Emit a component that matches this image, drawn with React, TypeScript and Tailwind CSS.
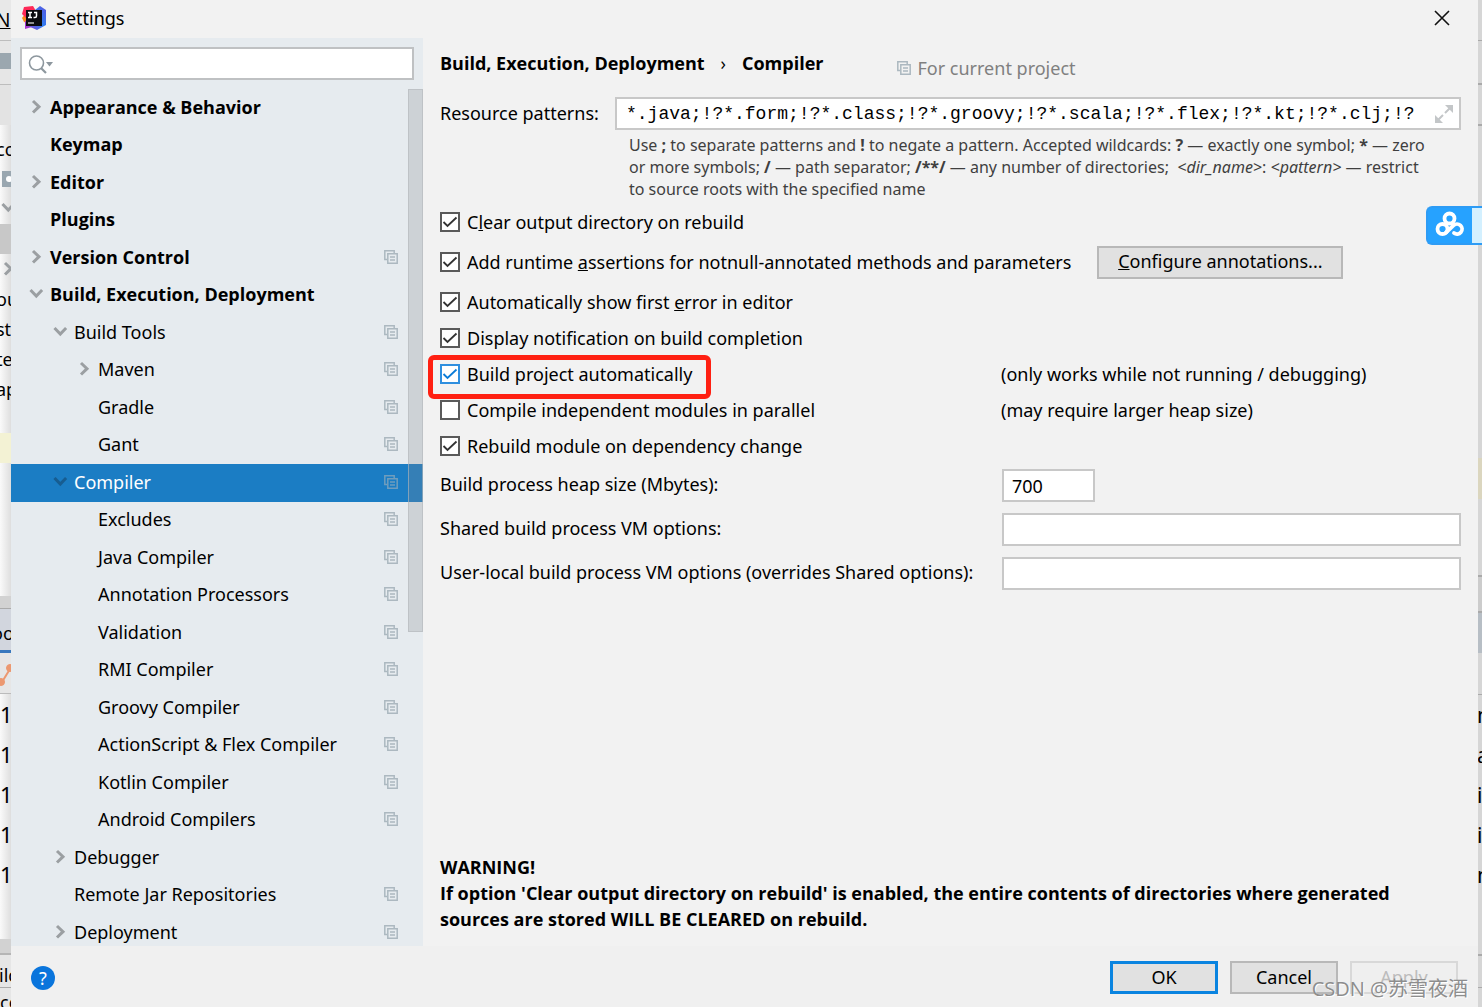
import type { ReactNode } from 'react'

type TreeItem = {
  label: string
  level: 0 | 1 | 2
  arrow?: 'open' | 'closed'
  project?: boolean
  selected?: boolean
}

const tree: TreeItem[] = [
  { label: 'Appearance & Behavior', level: 0, arrow: 'closed' },
  { label: 'Keymap', level: 0 },
  { label: 'Editor', level: 0, arrow: 'closed' },
  { label: 'Plugins', level: 0 },
  { label: 'Version Control', level: 0, arrow: 'closed', project: true },
  { label: 'Build, Execution, Deployment', level: 0, arrow: 'open' },
  { label: 'Build Tools', level: 1, arrow: 'open', project: true },
  { label: 'Maven', level: 2, arrow: 'closed', project: true },
  { label: 'Gradle', level: 2, project: true },
  { label: 'Gant', level: 2, project: true },
  { label: 'Compiler', level: 1, arrow: 'open', project: true, selected: true },
  { label: 'Excludes', level: 2, project: true },
  { label: 'Java Compiler', level: 2, project: true },
  { label: 'Annotation Processors', level: 2, project: true },
  { label: 'Validation', level: 2, project: true },
  { label: 'RMI Compiler', level: 2, project: true },
  { label: 'Groovy Compiler', level: 2, project: true },
  { label: 'ActionScript & Flex Compiler', level: 2, project: true },
  { label: 'Kotlin Compiler', level: 2, project: true },
  { label: 'Android Compilers', level: 2, project: true },
  { label: 'Debugger', level: 1, arrow: 'closed' },
  { label: 'Remote Jar Repositories', level: 1, project: true },
  { label: 'Deployment', level: 1, arrow: 'closed', project: true },
]

const indent = ["pl-[17px] font-['Open_Sans',sans-serif] font-bold", 'pl-[41px]', 'pl-[65px]']

const fieldClass = 'h-[33px] border-2 border-[#c8c8c8] bg-white px-2 outline-none'
const buttonClass = 'h-[33px] pb-[2px] text-center leading-none'

function ProjectIcon({ className = '' }: { className?: string }) {
  return (
    <svg width="14" height="14" viewBox="0 0 14 14" fill="none" stroke="currentColor" className={`shrink-0 ${className}`}>
      <path d="M3 9.5H.8V.8h9.4V3" strokeWidth="1.5" />
      <path d="M3.8 3.8h9.4v9.4H3.8z" strokeWidth="1.5" />
      <path d="M6 7h5M6 10h5" strokeWidth="1.3" />
    </svg>
  )
}

function Arrow({ kind, dark }: { kind?: 'open' | 'closed'; dark?: boolean }) {
  return (
    <svg width="16" height="16" viewBox="0 0 16 16" fill="none" strokeWidth="3" className={`shrink-0 ${dark ? 'stroke-[#175d91]' : 'stroke-[#9b9fa2]'}`}>
      {kind === 'closed' && <path d="M5 2l6 5.7-6 5.8" />}
      {kind === 'open' && <path d="M2.500 4l5.800 6 5.800-6" />}
    </svg>
  )
}

function Logo() {
  return (
    <svg width="24" height="24" viewBox="0 0 24 24">
      <defs>
        <linearGradient id="blue" x1="0" y1="1" x2="1" y2="0">
          <stop offset="0" stopColor="#8a3fd1" />
          <stop offset="0.5" stopColor="#2f7df0" />
          <stop offset="1" stopColor="#5a56e0" />
        </linearGradient>
      </defs>
      <path d="M0 12l3-4 4 2v8l-5-2z" fill="#f98a1c" />
      <path d="M2 1l9-1 3 5-10 7-4-4z" fill="#fe2857" />
      <path d="M3 15l5 2 2 4-7 2z" fill="#a63ad0" />
      <path d="M13 4l5-4 6 4v15l-9 5-9-4z" fill="url(#blue)" />
      <path d="M4 4h16v16H4z" fill="#0b0b10" />
      <path d="M6 6.500h4M8 6.500v5M6 11.500h4M12 6.500h2.500v3.500q0 1.500-1.500 1.500H11.500" stroke="#fff" strokeWidth="1.500" fill="none" />
      <path d="M6 17h6" stroke="#bbb" strokeWidth="1.500" />
    </svg>
  )
}

type CheckProps = { id: string; checked?: boolean; accent?: boolean; children: ReactNode }

function Check({ id, checked, accent, children }: CheckProps) {
  return (
    <label htmlFor={id} className="flex h-6 items-center gap-[7px] whitespace-nowrap">
      <span className="grid size-5 shrink-0">
        <input
          id={id}
          type="checkbox"
          defaultChecked={checked}
          className={`peer appearance-none border-2 bg-white [grid-area:1/1] ${accent ? 'border-[#2f8fdf]' : 'border-[#5a5a5a]'}`}
        />
        <svg
          viewBox="0 0 20 20"
          fill="none"
          strokeWidth="1.800"
          className={`pointer-events-none invisible [grid-area:1/1] peer-checked:visible ${accent ? 'stroke-[#0a7cd8]' : 'stroke-[#333]'}`}
        >
          <path d="M3.500 10l4 4 9-8.500" />
        </svg>
      </span>
      <span>{children}</span>
    </label>
  )
}

// slivers of the IDE window showing on either side of the dialog
function LeftStrip() {
  return (
    <div aria-hidden="true" className="flex w-[11px] shrink-0 flex-col overflow-hidden bg-linear-to-r from-[#fafafa] to-[#dedede] whitespace-nowrap">
      <div className="h-[41px] shrink-0 border-b border-[#bdbdbd] bg-[#e8e8e8] pt-1 text-[19px] leading-8 underline">
        <span className="-ml-1">N</span>
      </div>
      <div className="h-11 shrink-0 border-b border-[#bdbdbd] bg-[#e6e6e6] pt-3">
        <div className="h-4 bg-[#9ba7af]" />
      </div>
      <div className="h-10 shrink-0 bg-[#e3e3e3]" />
      <div className="h-[46px] shrink-0 pt-2 leading-8">
        <span className="-ml-1">cc</span>
      </div>
      <div className="ml-[2px] h-4 shrink-0 bg-[#9aa7b0] pt-[5px] pl-1">
        <div className="size-[6px] rounded-full bg-white" />
      </div>
      <div className="flex h-[37px] shrink-0 items-end pb-2"><Arrow kind="open" /></div>
      <div className="h-[30px] shrink-0 bg-[#c8c8c8]" />
      <div className="flex h-[30px] shrink-0 items-center"><Arrow kind="closed" /></div>
      {['ou', 'st', 'te', 'ap'].map((t) => (
        <div key={t} className="h-[30px] shrink-0 leading-[30px]">
          <span className="-ml-1">{t}</span>
        </div>
      ))}
      <div className="mt-[29px] h-[30px] shrink-0 bg-[#f3f2d4]" />
      <div className="mt-[133px] h-[13px] shrink-0 border-b border-[#aaa] bg-[#d2d2d2]" />
      <div className="h-[44px] shrink-0 border-b-3 border-[#3a78bd] bg-[#d2d6de] leading-[48px]">
        <span className="-ml-2">oo</span>
      </div>
      <div className="h-[41px] shrink-0 border-b border-[#bbb] bg-[#e6e6e6]">
        <svg width="11" height="36" viewBox="0 0 11 36" fill="#ec9870" stroke="#ec9870">
          <path d="M2 29l8-13" strokeWidth="2" />
          <circle cx="1" cy="29" r="3.500" />
          <circle cx="10" cy="15" r="3.500" />
        </svg>
      </div>
      <div className="flex h-[245px] shrink-0 flex-col text-[22px] leading-10">
        {[1, 2, 3, 4, 5].map((n) => <span key={n}>1</span>)}
      </div>
      <div className="h-4 shrink-0 border-b-2 border-[#b5b5b5] bg-[#d2d2d2]" />
      <div className="h-[33px] shrink-0 border-b border-[#aaa] bg-[#e6e6e6] leading-10">
        <span className="-ml-px">ild</span>
      </div>
      <div className="shrink-0 bg-[#e6e6e6] leading-7">co</div>
    </div>
  )
}

function RightStrip() {
  return (
    <div aria-hidden="true" className="flex w-1 shrink-0 flex-col overflow-hidden bg-[#d6d6d6] text-[21px]">
      <div className="h-[41px] shrink-0 border-b border-[#aaa]" />
      <div className="h-11 shrink-0 border-b-2 border-[#aaa]" />
      <div className="h-[41px] shrink-0 border-b-2 border-[#aaa]" />
      <div className="mt-[332px] h-[41px] shrink-0 bg-[#dbd6bf]" />
      <div className="mt-[76px] h-[38px] shrink-0 border-y-2 border-[#aaa] bg-[#ccc]" />
      <div className="h-10 shrink-0 bg-[#b7bec5]" />
      <div className="h-[42px] shrink-0 border-b border-[#aaa]" />
      <div className="flex h-[261px] shrink-0 flex-col border-b-2 border-[#aaa] leading-10">
        {['m', 'a', 'i', 'i', 'm'].map((c, i) => <span key={i} className="-ml-px">{c}</span>)}
      </div>
      <div className="h-8 shrink-0 border-b border-[#aaa]" />
    </div>
  )
}

function Sidebar() {
  return (
    <aside className="flex w-[412px] shrink-0 flex-col bg-[#e6ebef]">
      <div className="mx-[9px] mt-[9px] flex h-[33px] shrink-0 items-center border-2 border-[#bfc1c3] bg-white pl-[6px]">
        <svg width="26" height="20" viewBox="0 0 26 20" fill="none" stroke="#8d979e" className="shrink-0">
          <circle cx="8.500" cy="9" r="7" strokeWidth="1.600" />
          <path d="M13 14l5 5" strokeWidth="2.200" />
          <path d="M18 8h7l-3.500 4.500z" fill="#8d979e" stroke="none" />
        </svg>
        <input aria-label="Search settings" type="text" className="h-full min-w-0 flex-1 bg-transparent outline-none" />
      </div>
      <nav className="relative mt-[9px] min-h-0 flex-1 overflow-hidden">
        <ul>
          {tree.map(({ label, level, arrow, project, selected }) => (
            <li key={label} className="odd:h-[38px] even:h-[37px]">
              <a
                href="#"
                className={`flex h-full items-center gap-[6px] pr-[25px] pb-[3px] whitespace-nowrap ${indent[level]} ${selected ? 'bg-[#1b7dc4] text-white' : ''}`}
              >
                <Arrow kind={arrow} dark={selected} />
                <span className="flex-1">{label}</span>
                {project && <ProjectIcon className={selected ? 'text-[#6f9dbd]' : 'text-[#acb8c0]'} />}
              </a>
            </li>
          ))}
        </ul>
        {/* scrollbar thumb */}
        <div className="absolute top-0 right-0 h-[543px] w-[15px] border border-[#b4b7bb]/60 bg-[#85878c]/25" />
      </nav>
    </aside>
  )
}

function CompilerPage() {
  return (
    <main className="flex min-w-0 flex-1 flex-col pr-[17px] pb-[14px] pl-[17px]">
      <header className="flex h-[47px] items-start pt-[11px] leading-7">
        <h1 className="flex gap-4 font-['Open_Sans',sans-serif] font-bold">
          <span>Build, Execution, Deployment</span>
          <span className="font-normal">›</span>
          <span>Compiler</span>
        </h1>
        <p className="mt-[5px] ml-[74px] flex items-center gap-[6px] text-[#808080]">
          <ProjectIcon className="text-[#acb8c0]" />
          For current project
        </p>
      </header>

      <div className="mt-3 flex items-center">
        <label htmlFor="patterns" className="w-[175px] pb-px whitespace-nowrap">Resource patterns:</label>
        <div className="flex h-[33px] min-w-0 flex-1 items-center border-2 border-[#c8c8c8] bg-white pr-[6px] pl-[9px]">
          <input
            id="patterns"
            type="text"
            defaultValue="*.java;!?*.form;!?*.class;!?*.groovy;!?*.scala;!?*.flex;!?*.kt;!?*.clj;!?"
            className="min-w-0 flex-1 font-['Liberation_Mono',monospace] text-lg outline-none"
          />
          <svg width="18" height="18" viewBox="0 0 18 18" fill="#c3c6c8" stroke="#c3c6c8" strokeWidth="2" className="shrink-0">
            <path d="M10 0h8v8z" stroke="none" />
            <path d="M0 18v-8l8 8z" stroke="none" />
            <path d="M15 3l-5 5M3 15l5-5" />
          </svg>
        </div>
      </div>
      <p className="mt-1 ml-[189px] text-base leading-[22px] whitespace-nowrap text-[#3f3f3f]">
        Use <b>;</b> to separate patterns and <b>!</b> to negate a pattern. Accepted wildcards: <b>?</b> — exactly one symbol; <b>*</b> — zero
        <br />
        or more symbols; <b>/</b> — path separator; <b>/**/</b> — any number of directories; <i>&nbsp;&lt;dir_name&gt;</i>: <i>&lt;pattern&gt;</i> — restrict
        <br />
        to source roots with the specified name
      </p>

      <div className="mt-[10px] flex flex-col gap-3">
        <Check id="clear" checked>C<u>l</u>ear output directory on rebuild</Check>
        <div className="flex h-8 items-center gap-[26px]">
          <Check id="assertions" checked>Add runtime <u>a</u>ssertions for notnull-annotated methods and parameters</Check>
          <button type="button" className={`${buttonClass} w-[246px] border-2 border-[#b8b8b8] bg-[#e1e1e1]`}>
            <u>C</u>onfigure annotations...
          </button>
        </div>
        <Check id="first-error" checked>Automatically show first <u>e</u>rror in editor</Check>
        <Check id="notify" checked>Display notification on build completion</Check>
        <div className="flex">
          <div className="relative w-[561px] shrink-0">
            <Check id="auto" checked accent>Build project automatically</Check>
            <div className="pointer-events-none absolute -top-[7px] -left-3 h-11 w-[283px] rounded-md border-5 border-[#ff2012]" />
          </div>
          <span>(only works while not running / debugging)</span>
        </div>
        <div className="flex">
          <div className="w-[561px] shrink-0">
            <Check id="parallel">Compile independent modules in parallel</Check>
          </div>
          <span>(may require larger heap size)</span>
        </div>
        <Check id="dependency" checked>Rebuild module on dependency change</Check>
      </div>

      <div className="mt-[11px] grid grid-cols-[546px_1fr] items-center gap-x-4 gap-y-[11px] whitespace-nowrap">
        <label htmlFor="heap" className="pb-[3px]">Build process heap size (Mbytes):</label>
        <input id="heap" type="text" defaultValue="700" className={`${fieldClass} w-[93px]`} />
        <label htmlFor="shared-vm" className="pb-[3px]">Shared build process VM options:</label>
        <input id="shared-vm" type="text" className={`${fieldClass} w-full`} />
        <label htmlFor="local-vm" className="pb-[3px]">User-local build process VM options (overrides Shared options):</label>
        <input id="local-vm" type="text" className={`${fieldClass} w-full`} />
      </div>

      <p className="mt-auto font-['Open_Sans',sans-serif] leading-[26px] font-bold">
        WARNING!
        <br />
        If option 'Clear output directory on rebuild' is enabled, the entire contents of directories where generated
        <br />
        sources are stored WILL BE CLEARED on rebuild.
      </p>
    </main>
  )
}

export default function App() {
  return (
    <div className="relative flex h-screen overflow-hidden font-['Noto_Sans','Noto_Sans_CJK_SC',sans-serif] text-lg leading-6 text-black">
      <LeftStrip />
      <div className="flex min-w-0 flex-1 flex-col bg-[#f2f2f2]">
        <div className="flex h-[38px] shrink-0 items-center pr-[28px] pb-[2px] pl-[11px]">
          <Logo />
          <span className="ml-[10px] flex-1">Settings</span>
          <button type="button" aria-label="Close">
            <svg width="16" height="16" viewBox="0 0 16 16" stroke="#111" strokeWidth="1.600">
              <path d="M1 1l14 14M15 1L1 15" />
            </svg>
          </button>
        </div>

        <div className="flex min-h-0 flex-1">
          <Sidebar />
          <CompilerPage />
        </div>

        <footer className="flex h-[61px] shrink-0 items-center gap-3 bg-[#f0f0f0] px-5 pt-[2px]">
          <button type="button" aria-label="Help" className="mr-auto size-6 rounded-full bg-[#0a75dc] text-white">
            ?
          </button>
          <button type="button" className={`${buttonClass} w-[108px] border-3 border-[#0a84e0] bg-[#e1e1e1]`}>OK</button>
          <button type="button" className={`${buttonClass} w-[108px] border-2 border-[#b8b8b8] bg-[#e1e1e1]`}>Cancel</button>
          <button type="button" disabled className={`${buttonClass} w-[108px] border-2 border-[#d8d8d8] bg-[#efefef] text-[#bcbcbc]`}>Apply</button>
        </footer>
      </div>
      <RightStrip />

      {/* floating cloud drive badge */}
      <div className="absolute top-[206px] right-0 flex h-[39px] w-14 overflow-hidden rounded-l-md border-2 border-r-0 border-[#2e9cf5] bg-[#26a2ff]">
        <svg width="44" height="35" viewBox="0 0 44 35" fill="none" stroke="#fff" strokeWidth="3.800" strokeLinecap="round" className="shrink-0">
          <circle cx="21.500" cy="10.500" r="5" />
          <circle cx="14.500" cy="21" r="5" />
          <path d="M18 24.500l7.500-7a5 5 0 1 1 .5 7.500" />
        </svg>
        <div className="flex-1 bg-[#d3f0ff]" />
      </div>
      <span className="pointer-events-none absolute right-[14px] bottom-1 font-['Open_Sans','Noto_Sans_CJK_SC',sans-serif] text-[20px] leading-7 text-[#8d8d8d] [text-shadow:1px_1px_0_#fff]">
        CSDN @苏雪夜酒
      </span>
    </div>
  )
}
